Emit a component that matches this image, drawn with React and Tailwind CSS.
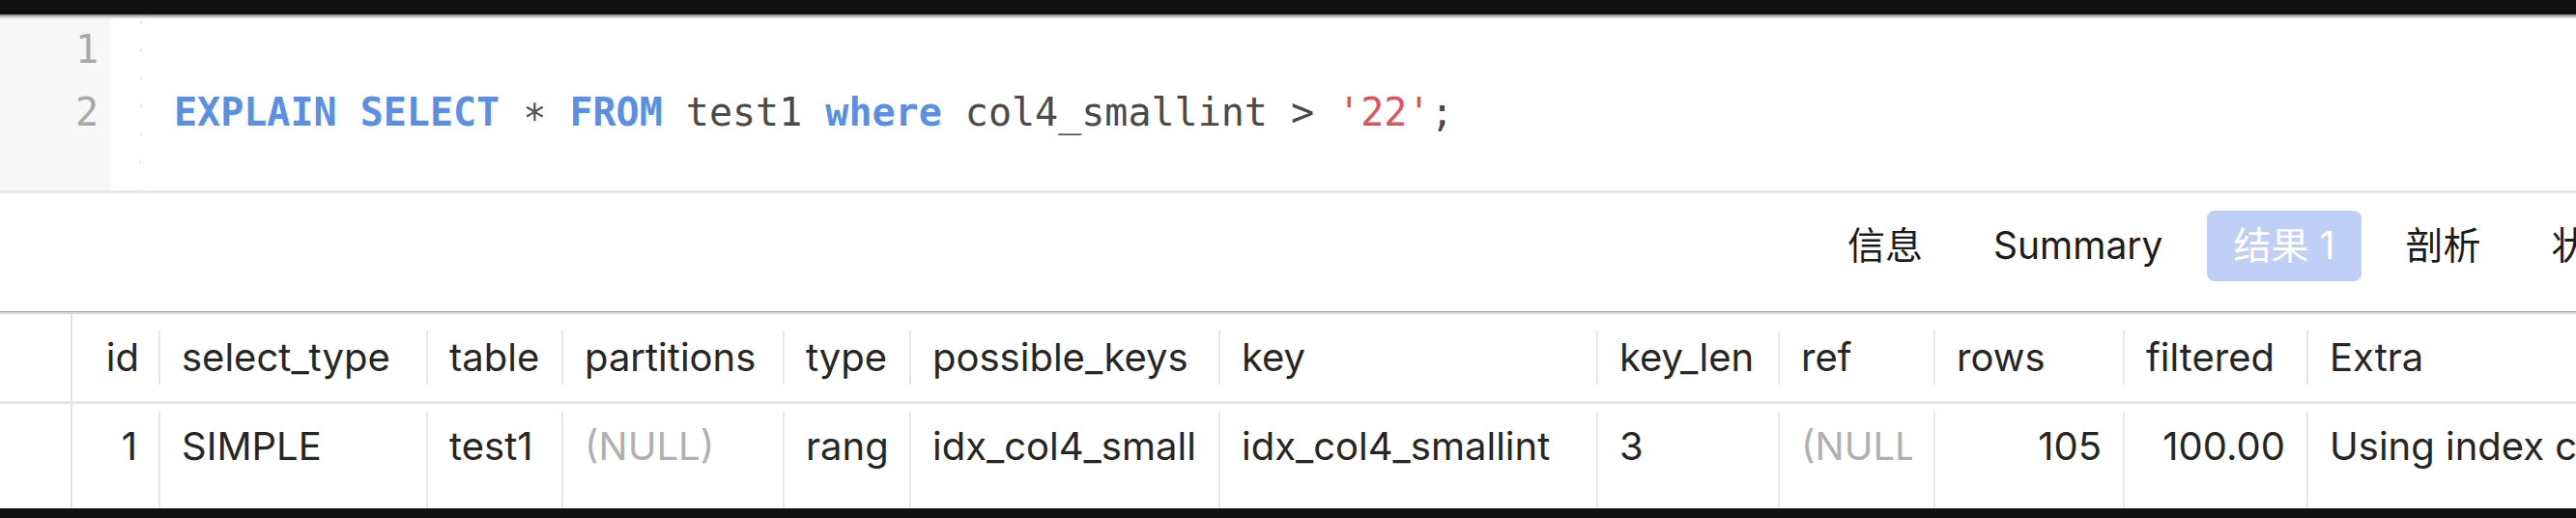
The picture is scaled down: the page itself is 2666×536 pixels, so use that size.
import React from "react";

const sans = "font-['Inter','Noto_Sans_CJK_SC',sans-serif]";
const mono = "font-['DejaVu_Sans_Mono',monospace]";

const columns = [
    { name: "id", w: "w-[91px]", value: "1", align: "right" },
    { name: "select_type", w: "w-[277px]", value: "SIMPLE" },
    { name: "table", w: "w-[140px]", value: "test1" },
    { name: "partitions", w: "w-[229px]", value: "(NULL)", muted: true },
    { name: "type", w: "w-[131px]", value: "range" },
    { name: "possible_keys", w: "w-[320px]", value: "idx_col4_smallint" },
    { name: "key", w: "w-[391px]", value: "idx_col4_smallint" },
    { name: "key_len", w: "w-[188px]", value: "3" },
    { name: "ref", w: "w-[161px]", value: "(NULL)", muted: true },
    { name: "rows", w: "w-[196px]", value: "105", align: "right" },
    { name: "filtered", w: "w-[190px]", value: "100.00", align: "right" },
    { name: "Extra", w: "flex-1", value: "Using index condition", last: true },
];

function Kw({ children }) {
    return <span className="font-bold text-[#5b8fe4]">{children}</span>;
}

function Editor() {
    return (
        <div className="flex h-[178px] bg-white">
            {/* gutter */}
            <div className={`w-[115px] bg-[#f7f7f7] flex flex-col items-end pr-[13px] text-[40px] leading-[65px] text-[#a8a8a8] ${mono}`}>
                <div>1</div>
                <div>2</div>
            </div>
            {/* indent guide */}
            <div className="w-[1px] ml-[30px] bg-[repeating-linear-gradient(to_bottom,transparent_0px,transparent_3px,#cfcfcf_3px,#cfcfcf_5px,transparent_5px,transparent_29px)]" />
            <div className={`pl-[34px] text-[40px] leading-[65px] text-[#4a4a4a] whitespace-pre ${mono}`}>
                <div>&nbsp;</div>
                <div>
                    <Kw>EXPLAIN</Kw> <Kw>SELECT</Kw>{" "}
                    <span className="inline-block translate-y-[7px] text-[#555]">*</span>{" "}
                    <Kw>FROM</Kw> test1 <Kw>where</Kw> col4_smallint &gt;{" "}
                    <span className="text-[#e0525d]">'22'</span>;
                </div>
            </div>
        </div>
    );
}

function Tabs() {
    const tabs = ["信息", "Summary", "结果 1", "剖析", "状态"];
    return (
        <div className={`flex items-start h-[122px] pt-[18px] pl-[1884px] gap-[17px] overflow-hidden text-[39px] text-[#1c1c1c] ${sans}`}>
            {tabs.map((t) => (
                <div
                    key={t}
                    className={
                        t === "结果 1"
                            ? "shrink-0 h-[73px] px-[28px] flex items-center rounded-[8px] bg-[#bfcff6] text-white"
                            : "shrink-0 h-[73px] px-[28px] flex items-center"
                    }
                >
                    {t}
                </div>
            ))}
        </div>
    );
}

function Table() {
    return (
        <div className={`flex flex-col text-[40px] text-[#262626] ${sans}`}>
            {/* header */}
            <div className="flex h-[93px] border-b-[3px] border-[#e6e6e6]">
                <div className="w-[75px] shrink-0 border-r-2 border-[#e2e2e2]" />
                {columns.map((c) => (
                    <div key={c.name} className={`${c.w} shrink-0 flex min-w-0`}>
                        <div className={`flex-1 min-w-0 flex items-center pl-[22px] pr-[20px] ${c.name === "id" ? "justify-end" : ""}`}>
                            <span className="whitespace-nowrap overflow-hidden">{c.name}</span>
                        </div>
                        {!c.last && <div className="w-[2px] my-[17px] bg-[#e8e8e8]" />}
                    </div>
                ))}
            </div>
            {/* row */}
            <div className="flex h-[108px]">
                <div className="w-[75px] shrink-0 border-r-2 border-[#e2e2e2]" />
                {columns.map((c) => (
                    <div key={c.name} className={`${c.w} shrink-0 flex min-w-0`}>
                        <div className={`flex-1 min-w-0 h-[88px] flex items-center pl-[22px] ${c.last ? "" : "pr-[22px]"}`}>
                            <div
                                className={`w-full overflow-hidden whitespace-nowrap ${c.align === "right" ? "text-right" : ""} ${c.muted ? "text-[#b0b0b0]" : ""}`}
                            >
                                {c.value}
                            </div>
                        </div>
                        {!c.last && <div className="w-[2px] mt-[8px] bg-[#e8e8e8]" />}
                    </div>
                ))}
            </div>
        </div>
    );
}

export default function App() {
    return (
        <div className="w-[2666px] h-[536px] overflow-hidden bg-white flex flex-col">
            <div className="h-[15px] bg-[#111111]" />
            <div className="h-[2px] bg-[#a0a0a0]" />
            <div className="h-[2px] bg-[#d6d6d6]" />
            <Editor />
            <div className="h-[3px] bg-[#e8e8e8]" />
            <Tabs />
            <div className="h-[1px] bg-[#9c9c9c]" />
            <div className="h-[2px] bg-[#dadada]" />
            <Table />
            <div className="flex-1 bg-[#111111]" />
        </div>
    );
}
